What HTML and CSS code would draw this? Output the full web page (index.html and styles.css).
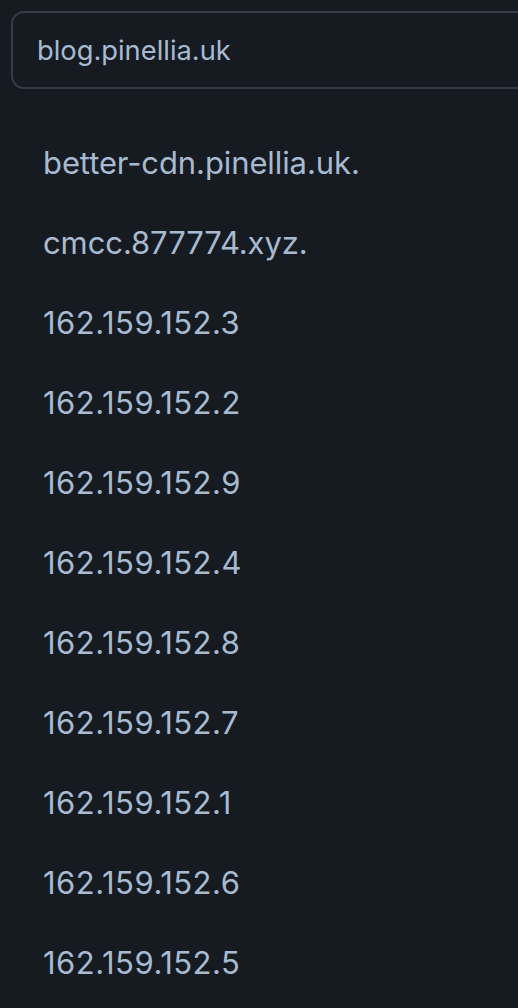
FILE: index.html
```html
<!DOCTYPE html>
<html>
<head>
<meta charset="utf-8">
<link rel="stylesheet" href="styles.css">
</head>
<body>
<div class="page">
  <div class="search">blog.pinellia.uk</div>
  <ul class="list">
    <li>better-cdn.pinellia.uk.</li>
    <li>cmcc.877774.xyz.</li>
    <li class="ip">162.159.152.3</li>
    <li class="ip">162.159.152.2</li>
    <li class="ip">162.159.152.9</li>
    <li class="ip">162.159.152.4</li>
    <li class="ip">162.159.152.8</li>
    <li class="ip">162.159.152.7</li>
    <li class="ip">162.159.152.1</li>
    <li class="ip">162.159.152.6</li>
    <li class="ip">162.159.152.5</li>
  </ul>
</div>
</body>
</html>
```

FILE: styles.css
```css
html, body {
  margin: 0;
  padding: 0;
  background: #161b22;
  overflow: hidden;
}
.page {
  width: 518px;
  height: 1008px;
  padding-top: 11px;
  padding-left: 11px;
  box-sizing: border-box;
  font-family: Inter, "Noto Sans", sans-serif;
  color: #a7bad0;
}
.search {
  height: 78px;
  box-sizing: border-box;
  border: 2px solid #363c44;
  border-right: none;
  border-radius: 13px 0 0 13px;
  padding-left: 24px;
  display: flex;
  align-items: center;
  font-size: 27.3px;
}
.list {
  list-style: none;
  margin: 33px 0 0 0;
  padding: 0 0 0 32px;
}
.list li {
  height: 80px;
  display: flex;
  align-items: center;
  font-size: 31px;
  letter-spacing: -0.1px;
}
.list li.ip {
  letter-spacing: 0.5px;
}
```
